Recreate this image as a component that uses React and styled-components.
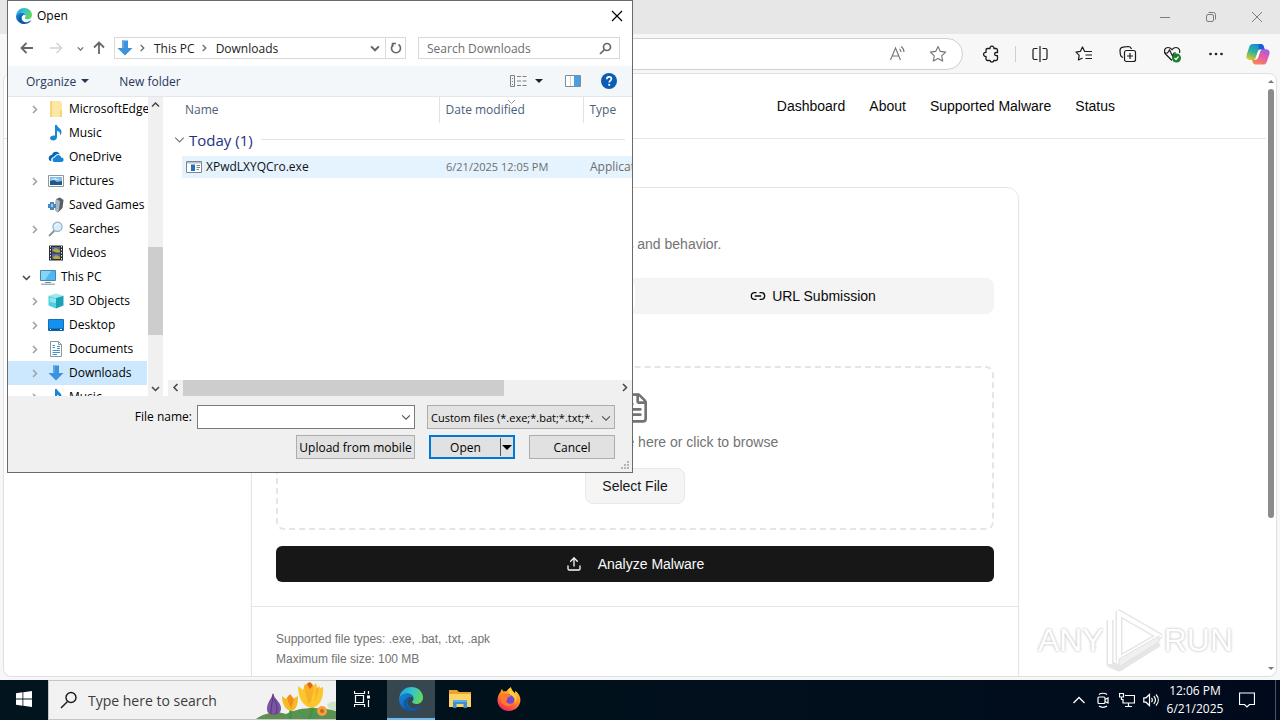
import { useState } from 'react';
import styled, { createGlobalStyle } from 'styled-components';
import { FileText, Link2, Upload } from 'lucide-react';

const GlobalStyle = createGlobalStyle`
  * {
    box-sizing: border-box;
  }
  body {
    margin: 0;
    overflow: hidden;
    background: #fff;
    font-family: 'Liberation Sans', Arial, sans-serif;
  }
  button, input, select {
    font-family: inherit;
    font-size: inherit;
    color: inherit;
    margin: 0;
    padding: 0;
    border: 0;
    border-radius: 0;
    background: none;
    outline: none;
  }
  svg {
    display: block;
    flex: none;
  }
`;

const uiFont = `'Open Sans', 'Noto Sans', sans-serif`;

const Desktop = styled.div`
  position: relative;
  display: flex;
  flex-direction: column;
  height: 100vh;
  overflow: hidden;
`;

/* ---------- Browser ---------- */

const Browser = styled.div`
  flex: 1;
  min-height: 0;
  display: flex;
  flex-direction: column;
  background: #f7f7f7;
`;

const BrowserTitle = styled.header`
  display: flex;
  justify-content: flex-end;
  height: 34px;
  background: #e7e7e7;
`;

const WindowButton = styled.button`
  display: flex;
  align-items: center;
  justify-content: center;
  width: 46px;
  height: 34px;
  color: #7c7c7c;
`;

const BrowserBar = styled.div`
  display: flex;
  align-items: center;
  height: 39px;
  padding: 0 2px 0 100px;
`;

const AddressField = styled.div`
  flex: 1;
  display: flex;
  align-items: center;
  justify-content: flex-end;
  height: 32px;
  margin-right: 6px;
  padding-right: 4px;
  border: 1px solid #cfcfcf;
  border-radius: 16px;
  background: #fff;
`;

const BarButton = styled.button`
  display: flex;
  align-items: center;
  justify-content: center;
  width: ${({ $width }) => $width || 44}px;
  height: 32px;
  color: ${({ $muted }) => ($muted ? '#757575' : '#1b1b1b')};
`;

const BarDivider = styled.span`
  width: 1px;
  height: 16px;
  margin: 0 2px;
  background: #cfcfcf;
`;

const Viewport = styled.div`
  flex: 1;
  min-height: 0;
  display: flex;
  margin: 0 3px 3px;
  border: 1px solid #e0e0e0;
  border-radius: 8px;
  background: #fff;
  overflow: hidden;
`;

const Page = styled.div`
  flex: 1;
  min-width: 0;
  overflow: hidden;
  color: #0a0a0a;
  font-size: 14px;
  line-height: 20px;
`;

const PageScroll = styled.div`
  display: flex;
  flex-direction: column;
  align-items: center;
  width: 10px;
  padding: 6px 0;
  gap: 6px;
`;

const PageScrollTrack = styled.div`
  flex: 1;
  display: flex;
  flex-direction: column;
`;

const PageThumb = styled.div`
  flex: 0 0 75%;
  width: 6px;
  border-radius: 3px;
  background: #8b8b8b;
`;

const SiteHeader = styled.header`
  border-bottom: 1px solid #e5e5e5;
`;

const SiteNav = styled.nav`
  display: flex;
  align-items: center;
  justify-content: flex-end;
  gap: 24px;
  max-width: 1024px;
  height: 64px;
  margin: 0 auto;
  padding: 0 32px;
`;

const SiteLink = styled.a`
  color: #0a0a0a;
  text-decoration: none;
`;

const Card = styled.section`
  max-width: 768px;
  margin: 48px auto;
  border: 1px solid #e5e5e5;
  border-radius: 12px;
  box-shadow: 0 1px 2px rgba(0, 0, 0, 0.06);
`;

const CardBody = styled.div`
  padding: 24px;
`;

const CardTitle = styled.h1`
  margin: 0 0 6px;
  font-size: 16px;
  line-height: 16px;
`;

const Muted = styled.p`
  margin: 0;
  color: #737373;
`;

const TabList = styled.div`
  display: flex;
  height: 36px;
  margin: 24px 0 16px;
  padding: 3px;
  border-radius: 8px;
  background: #f4f4f4;
`;

const Tab = styled.button`
  flex: 1;
  display: flex;
  align-items: center;
  justify-content: center;
  gap: 6px;
  border-radius: 6px;
  background: ${({ $active }) => ($active ? '#fff' : 'transparent')};
`;

const FieldLabel = styled.label`
  display: block;
`;

const DropZone = styled.div`
  display: flex;
  flex-direction: column;
  align-items: center;
  margin: 16px 0;
  padding: 24px;
  border: 2px dashed #e5e5e5;
  border-radius: 8px;
  color: #737373;

  p {
    margin: 8px 0 16px;
  }
`;

const SelectFile = styled.button`
  height: 36px;
  padding: 0 16px;
  border: 1px solid #e8e8e8;
  border-radius: 8px;
  background: #f5f5f5;
  color: #171717;
`;

const AnalyzeButton = styled.button`
  display: flex;
  align-items: center;
  justify-content: center;
  gap: 16px;
  width: 100%;
  height: 36px;
  border-radius: 6px;
  background: #171717;
  color: #fafafa;
`;

const CardFooter = styled.footer`
  display: flex;
  flex-direction: column;
  gap: 4px;
  padding: 24px;
  border-top: 1px solid #e5e5e5;
  color: #737373;
  font-size: 12px;
  line-height: 16px;
`;

const Watermark = styled.div`
  position: absolute;
  right: 47px;
  bottom: 48px;
  display: flex;
  align-items: center;
  color: #fff;
  font-size: 32px;
  line-height: 64px;
  text-shadow: 0 0 3px #c4c4c4, 0 0 2px #d4d4d4;
`;

/* ---------- Open dialog ---------- */

const Dialog = styled.div`
  position: absolute;
  left: 7px;
  top: 0;
  display: flex;
  flex-direction: column;
  width: 626px;
  height: 473px;
  border: 1px solid #6a6a6c;
  background: #fff;
  color: #000;
  font-family: ${uiFont};
  font-size: 12px;
  line-height: 16px;
  overflow: hidden;
`;

const DialogTitle = styled.div`
  display: flex;
  align-items: center;
  gap: 5px;
  height: 29px;
  padding: 0 9px 0 8px;
`;

const DialogClose = styled.button`
  margin-left: auto;
`;

const NavRow = styled.div`
  display: flex;
  align-items: center;
  height: 36px;
  padding: 0 12px 0 10px;
`;

const NavButton = styled.button`
  display: flex;
  align-items: center;
  justify-content: center;
  width: ${({ $width }) => $width}px;
  height: 20px;
  color: ${({ $disabled }) => ($disabled ? '#d2d2d2' : '#666')};
`;

const PathBox = styled.div`
  flex: 1;
  display: flex;
  align-items: center;
  height: 22px;
  margin-right: 12px;
  padding-left: 2px;
  border: 1px solid #d9d9d9;
`;

const Crumb = styled.button`
  padding-left: 3px;
  color: #222;
`;

const PathEnd = styled.div`
  display: flex;
  margin-left: auto;

  button + button {
    border-left: 1px solid #d9d9d9;
  }
`;

const SearchBox = styled.label`
  display: flex;
  align-items: center;
  width: 202px;
  height: 22px;
  padding: 0 7px 0 8px;
  border: 1px solid #d9d9d9;

  input {
    flex: 1;
    min-width: 0;
  }
  input::placeholder {
    color: #6d6d6d;
    opacity: 1;
  }
`;

const Toolbar = styled.div`
  display: flex;
  align-items: center;
  height: 31px;
  padding: 0 15px 0 18px;
  border-bottom: 1px solid #e3e7ec;
  background: #f4f7fa;
  color: #27365c;
`;

const ToolButton = styled.button`
  display: flex;
  align-items: center;
  gap: ${({ $inner }) => $inner || 5}px;
  margin-right: ${({ $gap }) => $gap || 0}px;
`;

const ToolbarEnd = styled.div`
  display: flex;
  align-items: center;
  margin-left: auto;
`;

const Panes = styled.div`
  flex: 1;
  min-height: 0;
  display: flex;
`;

const Tree = styled.ul`
  width: 140px;
  margin: 0;
  padding: 0;
  list-style: none;
  overflow: hidden;
`;

const TreeItem = styled.li`
  display: flex;
  align-items: center;
  height: 24px;
  margin-right: 1px;
  padding-left: ${({ $root }) => ($root ? 12 : 20)}px;
  background: ${({ $selected }) => ($selected ? '#cce8ff' : 'transparent')};
  white-space: nowrap;
`;

const Twisty = styled.span`
  flex: none;
  display: flex;
  align-items: center;
  justify-content: center;
  width: 13px;
  height: 16px;
  margin-right: 7px;
`;

const TreeLabel = styled.span`
  margin-left: 5px;
`;

const VScroll = styled.div`
  display: flex;
  flex-direction: column;
  width: 15px;
  background: #f0f0f0;
`;

const HScroll = styled.div`
  display: flex;
  height: 16px;
  background: #f0f0f0;
`;

const ScrollButton = styled.button`
  display: flex;
  align-items: center;
  justify-content: center;
  width: 15px;
  height: 15px;
  flex: none;
  color: #444;
`;

const ScrollSpace = styled.div`
  flex: ${({ $grow }) => $grow};
`;

const ScrollThumb = styled.div`
  flex: ${({ $grow }) => $grow};
  background: #cdcdcd;
`;

const FilePane = styled.div`
  flex: 1;
  min-width: 0;
  display: flex;
  flex-direction: column;
  margin-left: 5px;
`;

const FileArea = styled.div`
  flex: 1;
  overflow: hidden;
`;

const FileTable = styled.table`
  width: 700px;
  table-layout: fixed;
  border-collapse: collapse;

  th, td {
    padding: 0;
    text-align: left;
    font-weight: normal;
    white-space: nowrap;
  }
  thead tr {
    height: 26px;
  }
`;

const HeadCell = styled.th`
  position: relative;
  color: #4c607a;

  && {
    padding-left: ${({ $pad }) => $pad}px;
    border-left: ${({ $line }) => ($line ? '1px solid #e2e2e2' : '0')};
  }
`;

const SortMark = styled.span`
  position: absolute;
  top: 0;
  left: 50%;
  margin-left: -4px;
`;

const GroupRow = styled.div`
  display: flex;
  align-items: center;
  gap: 4px;
  width: 457px;
  height: 33px;
  padding-left: 6px;
  color: #1e3287;
  font-size: 15px;
  line-height: 20px;

  &::after {
    content: '';
    flex: 1;
    height: 1px;
    margin-left: 4px;
    background: #e2e2e2;
  }
`;

const FileRow = styled.tr`
  height: 22px;
  color: #6d6d6d;

  td + td {
    padding-left: 7px;
    background: #e5f3ff;
  }
  td + td:nth-child(2) {
    padding-left: 4px;
    color: #111;
  }
  td:nth-child(3) {
    font-size: 11px;
  }
`;

const FileName = styled.span`
  display: flex;
  align-items: center;
  gap: 4px;
`;

const DialogFooter = styled.div`
  position: relative;
  display: flex;
  flex-direction: column;
  align-items: flex-end;
  gap: 6px;
  height: 76px;
  padding: 9px 17px 0 0;
  background: #f0f0f0;
`;

const FooterRow = styled.div`
  display: flex;
  align-items: center;
`;

const NameLabel = styled.label`
  margin-right: 5px;
`;

const ComboBox = styled.div`
  display: flex;
  align-items: center;
  width: 218px;
  height: 24px;
  margin-right: 12px;
  padding: 0 3px;
  border: 1px solid #7a7a7a;
  background: #fff;

  input {
    flex: 1;
    min-width: 0;
  }
`;

const TypeBox = styled.div`
  position: relative;
  width: 188px;
  height: 24px;
  border: 1px solid #adadad;
  background: #e3e3e3;

  select {
    width: 100%;
    height: 22px;
    padding: 0 16px 0 3px;
    appearance: none;
    font-size: 11px;
  }
  svg {
    position: absolute;
    top: 7px;
    right: 3px;
    pointer-events: none;
  }
`;

const PushButton = styled.button`
  width: ${({ $width }) => $width}px;
  height: 24px;
  margin-right: ${({ $gap }) => $gap || 0}px;
  border: 1px solid #adadad;
  background: #e1e1e1;
`;

const SplitButton = styled.div`
  display: flex;
  align-items: center;
  width: 86px;
  height: 24px;
  margin-right: 14px;
  border: 2px solid #0078d7;
  background: #e1e1e1;
`;

const SplitMain = styled.button`
  flex: 1;
`;

const SplitArrow = styled.button`
  display: flex;
  align-items: center;
  justify-content: center;
  width: 13px;
  height: 18px;
  border-left: 1px solid #555;
`;

const Grip = styled.span`
  position: absolute;
  right: 2px;
  bottom: 2px;
`;

/* ---------- Taskbar ---------- */

const Taskbar = styled.footer`
  display: flex;
  height: 40px;
  background: linear-gradient(90deg, #02141d, #01101c 60%, #010a1d);
  color: #fff;
  font-family: ${uiFont};
`;

const TaskButton = styled.button`
  display: flex;
  align-items: center;
  justify-content: center;
  width: ${({ $width }) => $width || 49}px;
  border-bottom: 2px solid ${({ $active }) => ($active ? '#76b9ed' : 'transparent')};
  background: ${({ $active }) => ($active ? '#36474f' : 'transparent')};
`;

const TaskSearch = styled.label`
  display: flex;
  align-items: center;
  width: 288px;
  padding-left: 11px;
  border: 1px solid #c5c5c5;
  border-right: 0;
  background: #f2f2f2;
  color: #1b1b1b;

  input {
    flex: 1;
    min-width: 0;
    margin-left: 10px;
    font-size: 14px;
  }
  input::placeholder {
    color: #3c3c3c;
    opacity: 1;
  }
`;

const Tray = styled.div`
  display: flex;
  align-items: center;
  margin-left: auto;
`;

const TrayButton = styled.button`
  display: flex;
  align-items: center;
  justify-content: center;
  width: ${({ $width }) => $width || 24}px;
  height: 40px;
`;

const Clock = styled.div`
  width: 64px;
  text-align: center;
  font-size: 12px;
  line-height: 18px;
  white-space: nowrap;
`;

const ShowDesktop = styled.button`
  width: 5px;
  height: 40px;
  margin-left: 8px;
  border-left: 1px solid #4b5563;
`;

/* ---------- Icons ---------- */

const Line = ({ size = 16, box = size, width = 1, children, ...rest }) => (
  <svg width={size} height={size} viewBox={`0 0 ${box} ${box}`} fill="none" stroke="currentColor" strokeWidth={width} aria-hidden="true" {...rest}>
    {children}
  </svg>
);

const chevrons = {
  up: 'M1 6.5 4.5 3 8 6.5',
  down: 'M1 3 4.5 6.5 8 3',
  left: 'M6.5 1 3 4.5 6.5 8',
  right: 'M3 1 6.5 4.5 3 8',
};

const Chevron = ({ dir, size = 9, color = 'currentColor', width = 1.5 }) => (
  <svg width={size} height={size} viewBox="0 0 9 9" fill="none" stroke={color} strokeWidth={width} aria-hidden="true">
    <path d={chevrons[dir]} />
  </svg>
);

const Caret = ({ up, size = 8, color = 'currentColor' }) => (
  <svg width={size} height={size / 2} viewBox="0 0 8 4" fill={color} aria-hidden="true">
    <path d={up ? 'M0 4 4 0l4 4z' : 'M0 0h8L4 4z'} />
  </svg>
);

const EdgeIcon = ({ size, id }) => (
  <svg width={size} height={size} viewBox="0 0 24 24" aria-hidden="true">
    <defs>
      <linearGradient id={`${id}-top`} x1="0" y1="0.3" x2="1" y2="0.6">
        <stop offset="0" stopColor="#1ba5e0" />
        <stop offset="0.5" stopColor="#36c5c8" />
        <stop offset="1" stopColor="#66d955" />
      </linearGradient>
      <linearGradient id={`${id}-low`} x1="0" y1="0" x2="1" y2="1">
        <stop offset="0" stopColor="#1687d8" />
        <stop offset="1" stopColor="#0f4a9b" />
      </linearGradient>
    </defs>
    <path d="M0.2 11.3C.8 4.8 6 0 12.300 0 19 0 24 4.800 24 10.400c0 4-3 6.500-6.500 6.500-3 0-4.300-1.100-4.300-2 0-.7 1.300-1.200 1.300-3.300 0-2.800-2.600-5-6-5-3.600 0-6.800 1.900-8.300 4.700z" fill={`url(#${id}-top)`} />
    <path d="M.1 11.500C1.500 8.500 4.600 6.600 8 6.600c3.600 0 6.300 2.200 6.400 4.800-.8-1-1.900-1.300-2.700-1.300-2 0-3.300 2.200-3.300 4.800 0 4.300 4 7 8.200 6.300 2-.3 3.900-1.300 5.100-2.300.4-.2.800 0 .6.500C20.500 22.300 16.500 24 12.300 24 5.500 24-.4 18.800.1 11.500z" fill={`url(#${id}-low)`} />
    <path d="M11.500 10.200c-3.800 1.500-4.800 6-2.700 9.400 1 1.700 2.900 3.100 5.400 4.200C8 25 2.800 19.500 5.400 13.800c1-2.300 3.400-4 6.100-3.600z" fill="#0c59a4" />
  </svg>
);

const CopilotIcon = () => (
  <svg width="24" height="22" viewBox="0 0 24 22" aria-hidden="true">
    <defs>
      <linearGradient id="cp-a" x1="0.6" y1="0" x2="0.2" y2="1">
        <stop offset="0" stopColor="#1687e0" />
        <stop offset="0.5" stopColor="#2fb59b" />
        <stop offset="1" stopColor="#e6c81e" />
      </linearGradient>
      <linearGradient id="cp-b" x1="0.8" y1="0" x2="0.2" y2="1">
        <stop offset="0" stopColor="#a35be8" />
        <stop offset="0.5" stopColor="#ea5f9e" />
        <stop offset="1" stopColor="#f98a45" />
      </linearGradient>
    </defs>
    <path d="M7 1h8c1.500 0 2.300 1 2.800 2.400l.9 3h-3.400c-2 0-3 .8-3.600 2.600L9.500 15c-.5 1.500-1.400 2-2.800 2H4.300C1 17-.2 14.800.7 11.700L3.200 4C3.900 1.900 5 1 7 1z" fill="url(#cp-a)" />
    <path d="M17 21.500H9.400c-1.500 0-2.300-1-2.800-2.400L6 16.800h2.600c2 0 3-.8 3.600-2.600l2-6c.5-1.500 1.400-2 2.800-2h2.700c3.300 0 4.500 2.200 3.600 5.300l-2.500 7.200c-.7 2-1.800 2.800-3.800 2.800z" fill="url(#cp-b)" />
    <path d="M12.500 1H15c1.500 0 2.300 1 2.800 2.400l.9 3h-3.400c-1.200 0-2 .3-2.600.9z" fill="#1b5fd0" />
    <path d="m12.700 6.800-2.800 8.400h1.600l2.700-7c.3-.8.800-1.400 1.400-1.700z" fill="#fff" />
  </svg>
);

const StarIcon = ({ size = 18 }) => (
  <Line size={size} box={18} width={1.1} strokeLinejoin="round">
    <path d="m9 1.500 2.300 4.900 5.300.7-3.900 3.700 1 5.300L9 13.500l-4.700 2.600 1-5.300-3.900-3.700 5.300-.7z" />
  </Line>
);

const DownloadArrow = ({ size = 16 }) => (
  <svg width={size} height={size} viewBox="0 0 16 16" aria-hidden="true">
    <path d="M5 .5h6V8h4.500L8 15.500.5 8H5z" fill="#3c93dc" />
    <path d="M5 .5h2V8H5z" fill="#5aa8e6" />
  </svg>
);

const Glyph = ({ children }) => (
  <svg width="16" height="16" viewBox="0 0 16 16" aria-hidden="true">{children}</svg>
);

const folderIcons = {
  folder: (
    <Glyph>
      <path d="M2 0h10l2 2v14H2z" fill="#fbe7a2" />
      <path d="M2 0h2v16H2zM12 9h2v7h-2z" fill="#f5d67c" />
    </Glyph>
  ),
  music: (
    <Glyph>
      <path d="M7 0h2c.3 2.500 4.500 3.500 4.500 7 0 1.500-.6 2.600-1.300 3.500.4-2.700-1-4-3.200-4.700V12c0 2-1.700 3.500-3.800 3.500C3.400 15.500 2 14.500 2 13c0-1.800 2.500-3 5-2.500z" fill="#1888d2" />
    </Glyph>
  ),
  onedrive: (
    <Glyph>
      <path d="M1 10.500C0 8 2 6 4 6c.6-2.500 3-3.700 5.200-3 1.400.4 2.300 1.400 2.700 2.600-3-.7-5 .5-5.700 2.600C4 8.200 3.200 10 3.500 12 2.300 12 1.400 11.500 1 10.500z" fill="#0a64b4" />
      <path d="M4.500 11c0-1.500 1-2.500 2.400-2.500C7.500 6.500 9 5.800 10.500 6s2.400 1.200 2.600 2.500c1.500 0 2.500.9 2.500 2.300S14.500 13 13 13H6.500c-1.200 0-2-.8-2-2z" fill="#1683d8" />
      <path d="M4.200 12.500C2.800 9.500 4.500 8.200 6.300 8.200 7.300 5.800 9.800 5 11.900 5.600" fill="none" stroke="#fff" strokeWidth="0.800" />
    </Glyph>
  ),
  pictures: (
    <Glyph>
      <path d="M.5 2.500h15v11H.5z" fill="#fff" stroke="#8c979e" />
      <path d="M2 4h12v8H2z" fill="#7fbdea" />
      <path d="m2 8 4-1 3 2 5-1v4H2z" fill="#23578a" />
      <path d="M2 6.500 7 5l5 2z" fill="#d9effc" />
    </Glyph>
  ),
  games: (
    <Glyph>
      <path d="m8 2 4-1.500L15.500 3l-1 8L10 15.500 7 13z" fill="#555f68" />
      <path d="m8 2 4 2-1 9-1 2.500L7 13z" fill="#aab4bc" />
      <path d="M2 5h4v2h2v4H6v2H2v-2H0V7h2z" fill="#4689c0" />
      <path d="M3 7h2v3H3z" fill="#9ccbec" />
    </Glyph>
  ),
  search: (
    <Glyph>
      <path d="m6.500 9.500-5.500 5.500" stroke="#8c949b" strokeWidth="1.800" />
      <circle cx="9.500" cy="5.800" r="4.600" fill="#d8effb" stroke="#8fb0c8" strokeWidth="1.200" />
      <path d="M7 5c.3-1.200 1.500-2 3-1.800" stroke="#fff" fill="none" />
    </Glyph>
  ),
  videos: (
    <Glyph>
      <path d="M1 .5h14v15H1z" fill="#2b2d35" />
      <path d="M2.500 1v14M13.500 1v14" stroke="#e6e6e6" strokeDasharray="1.500 1.500" />
      <path d="M4 2h8v5.500H4zM4 8.500h8V14H4z" fill="#5369a4" />
      <path d="m4 5 4-2 4 2.500v2H8zM5 12l3-2 4 2v2H6z" fill="#b8a835" />
    </Glyph>
  ),
  pc: (
    <Glyph>
      <path d="M.5 1.500h15v10H.5z" fill="#4fb8f0" stroke="#4389ad" />
      <path d="M1 2h10L5 11H1z" fill="#8ad3f8" />
      <path d="M5 13.500h6M1 15.200h14" stroke="#7c8c96" />
    </Glyph>
  ),
  objects: (
    <Glyph>
      <path d="m8 .5 7.500 2.200L8 5 .5 2.700z" fill="#9aeaf0" />
      <path d="M.5 2.700 8 5v10.500L.5 12.500z" fill="#52cfdc" />
      <path d="M15.500 2.700 8 5v10.500l7.500-3z" fill="#1aa3b8" />
      <path d="M2 4.500 8 6v4L2 9z" fill="#8fe6ee" />
    </Glyph>
  ),
  desktop: (
    <Glyph>
      <path d="M.5 2.500h15v11H.5z" fill="#1592ef" stroke="#0f70b8" />
      <path d="M1 11.500h14v2H1z" fill="#0a568f" />
      <path d="M2 12.500h1M12 12.500h2" stroke="#fff" />
    </Glyph>
  ),
  documents: (
    <Glyph>
      <path d="M2.500.5h8l3 3v12h-11z" fill="#fff" stroke="#8a979f" />
      <path d="M10.500.5v3h3" fill="none" stroke="#8a979f" />
      <path d="M4.500 4.500H7M9 5.500h3M4.500 6.500H7M9 7.500h3M4.500 9.500h7.500M4.500 11.500h7.500M4.500 13.500H9" stroke="#3d93cb" />
    </Glyph>
  ),
  downloads: <DownloadArrow />,
};

const treeItems = [
  { label: 'MicrosoftEdge', icon: 'folder', expand: true },
  { label: 'Music', icon: 'music' },
  { label: 'OneDrive', icon: 'onedrive' },
  { label: 'Pictures', icon: 'pictures', expand: true },
  { label: 'Saved Games', icon: 'games' },
  { label: 'Searches', icon: 'search', expand: true },
  { label: 'Videos', icon: 'videos' },
  { label: 'This PC', icon: 'pc', root: true },
  { label: '3D Objects', icon: 'objects', expand: true },
  { label: 'Desktop', icon: 'desktop', expand: true },
  { label: 'Documents', icon: 'documents', expand: true },
  { label: 'Downloads', icon: 'downloads', expand: true },
  { label: 'Music', icon: 'music', expand: true },
];

const FlowerArt = () => (
  <svg width="80" height="38" viewBox="0 0 80 38" aria-hidden="true">
    <path d="M0 38c8-6 20-8 30-5 12-7 34-8 50-3v8z" fill="#5d9150" />
    <g transform="translate(4 0)">
      <path d="M13 12c-1 5-6 9-6 16 0 4 3 6 7 6 5 0 7-3 7-7 0-6-7-9-8-15z" fill="#7a55a0" />
      <path d="M13 13c0 7-2 10-2 20M14 18c3 5 4 9 2 15" stroke="#55357c" fill="none" />
      <path d="M31 29c-1 4 0 7-1 9M52 26c1 5-2 9-3 12" stroke="#42924a" strokeWidth="3" fill="none" />
      <path d="M46 38c-3-6-5-8-7-10 1 5 3 8 6 10zM51 37c4-3 7-7 13-9-3 6-7 8-11 10z" fill="#3d9a52" />
      <path d="m22 15 4 3 3-4 4 4 5-3c0 7-1 14-7 15-6-1-9-8-9-15z" fill="#f6ba24" />
      <path d="m27 17 3-4 4 5-3 10z" fill="#f18f1d" />
      <path d="m38 5 5 4 2-6 6 4 5-5 2 6 5-2c1 11-3 19-11 21-10-1-14-12-14-22z" fill="#fcc62d" />
      <path d="m44 5 5-4 5 5-3 15-3 2zM56 8l4-3-5 16z" fill="#f8b026" />
      <path d="m47 3 3-2 3 3-3 4z" fill="#df641b" />
      <circle cx="62" cy="30" r="5" fill="#f5a13a" />
      <circle cx="62" cy="30" r="2" fill="#c9651c" />
    </g>
    <path d="M71 24c3-4 7-4 9-3v8c-4 1-7-1-9-5z" fill="#b9d7ac" opacity="0.6" />
  </svg>
);

const FirefoxIcon = () => (
  <svg width="24" height="24" viewBox="0 0 24 24" aria-hidden="true">
    <defs>
      <linearGradient id="ff" x1="0.8" y1="0" x2="0.3" y2="1">
        <stop offset="0" stopColor="#ffe14d" />
        <stop offset="0.4" stopColor="#ff9a1f" />
        <stop offset="1" stopColor="#f5235e" />
      </linearGradient>
    </defs>
    <path d="M3.500 5c.3-1.300.8-2.200 1.500-3 .3 1 .8 1.800 1.600 2.500 1-.3 2-.4 3-.3C10.500 2.500 12.500.8 14 .3c0 2.500 2 3.800 4 6 .3-.8.2-1.700 0-2.500 3.500 2.400 5.700 5.800 5.400 9.800C23 19.500 18 24 12 24 5.500 24 .5 19.200.5 13c0-3 1-5.800 3-8z" fill="url(#ff)" />
    <circle cx="12" cy="12.500" r="5.200" fill="#7646d6" />
    <path d="M4 8c2-2 5-2 7-.5l3 .5c0 1.500-1.500 2-3 2-1 1.500-.5 3-2 4 1 2.500 4 3.500 7 2-2 3.500-6 4-9 2-3-2.200-4-6-3-10z" fill="#ff7a2b" />
    <path d="M14 .3c0 4 4.500 6 5.500 11 .4 2-.2 4-1.500 5.500 2-6-3-7.500-5.500-10C11 4 12.500 1.500 14 .3z" fill="#ffcf3a" />
  </svg>
);

export default function App() {
  const [fileName, setFileName] = useState('');

  return (
    <>
      <GlobalStyle />
      <Desktop>
        <Browser>
          <BrowserTitle>
            <WindowButton aria-label="Minimize">
              <Line size={12}><path d="M1 6.500h10" /></Line>
            </WindowButton>
            <WindowButton aria-label="Restore">
              <Line size={12}>
                <rect x="1.500" y="3.500" width="7" height="7" rx="1.500" />
                <path d="M3.500 1.500h5a2 2 0 0 1 2 2v5" />
              </Line>
            </WindowButton>
            <WindowButton aria-label="Close">
              <Line size={12}><path d="m1 1 10 10M11 1 1 11" /></Line>
            </WindowButton>
          </BrowserTitle>

          <BrowserBar>
            <AddressField>
              <BarButton $muted $width={40} aria-label="Read aloud">
                <Line size={18} width={1.1}>
                  <path d="m1.500 15 5-12 5 12M3.200 11h6.600M10.500 4c1 .8 1.500 1.800 1.500 3M12 1.500c2 1.300 3 3 3 5.500" />
                </Line>
              </BarButton>
              <BarButton $muted $width={40} aria-label="Add to favorites">
                <StarIcon />
              </BarButton>
            </AddressField>
            <BarButton aria-label="Extensions">
              <Line size={18} width={1.300} strokeLinejoin="round">
                <path d="M5.500 3.500H8a2 2 0 1 1 3.900 0h2A1.500 1.500 0 0 1 15.500 5v2.500h-1.300a1.600 1.600 0 0 0 0 3.200h1.300V14a1.500 1.500 0 0 1-1.500 1.500h-2.100a2 2 0 0 1-3.900 0H5.500A1.500 1.500 0 0 1 4 14v-2.700a2 2 0 1 1 0-3.900V5a1.500 1.500 0 0 1 1.500-1.500z" />
              </Line>
            </BarButton>
            <BarDivider />
            <BarButton aria-label="Split screen">
              <Line size={18} width={1.200}>
                <path d="M9 1v16M6.500 3.500h-3a1.500 1.500 0 0 0-1.500 1.500v8a1.500 1.500 0 0 0 1.500 1.500h3M11.500 3.500h3A1.500 1.500 0 0 1 16 5v8a1.500 1.500 0 0 1-1.500 1.500h-3" />
              </Line>
            </BarButton>
            <BarButton aria-label="Favorites">
              <Line size={18} width={1.200} strokeLinejoin="round">
                <path d="M10.500 6.500h-.8L7.500 2 5.300 6.400l-4.300.7 3.200 3.200-.8 4.700L7.500 13M10.500 6.500H17M10.500 10H17M10.500 13.500H17" />
              </Line>
            </BarButton>
            <BarButton aria-label="Collections">
              <Line size={18} width={1.200}>
                <path d="M4 12.500C2 12 1.500 10.500 1.300 9L1 5.500C1 3.500 2 2.500 4 2.200l5-.7c1.800 0 3 .8 3.500 2.500" />
                <rect x="5.500" y="5.500" width="11" height="11" rx="2" />
                <path d="M11 8v6M8 11h6" />
              </Line>
            </BarButton>
            <BarButton aria-label="Browser essentials">
              <Line size={18} width={1.200}>
                <path d="M9 15.500 2.500 9C.5 6.500 1.500 2.500 5 2.500c2 0 3 1 4 2.200 1-1.200 2-2.200 4-2.200 3 0 4.500 3 3.500 5.500M1 8h3.500L6.500 5l3 6 1.500-3h2" />
                <circle cx="13.500" cy="13" r="4.500" fill="#16812b" stroke="none" />
                <path d="m11.500 13 1.500 1.500 2.500-3" stroke="#fff" />
              </Line>
            </BarButton>
            <BarButton aria-label="Settings and more">
              <Line size={18}>
                <g fill="currentColor" stroke="none">
                  <circle cx="3.500" cy="9" r="1.300" />
                  <circle cx="9" cy="9" r="1.300" />
                  <circle cx="14.500" cy="9" r="1.300" />
                </g>
              </Line>
            </BarButton>
            <BarButton $width={40} aria-label="Copilot"><CopilotIcon /></BarButton>
          </BrowserBar>

          <Viewport>
            <Page>
              <SiteHeader>
                <SiteNav>
                  <SiteLink href="#dashboard">Dashboard</SiteLink>
                  <SiteLink href="#about">About</SiteLink>
                  <SiteLink href="#supported">Supported Malware</SiteLink>
                  <SiteLink href="#status">Status</SiteLink>
                </SiteNav>
              </SiteHeader>

              <Card>
                <CardBody>
                  <CardTitle>Submit Malware</CardTitle>
                  <Muted>Upload a file or submit a URL to inspect its characteristics and behavior.</Muted>
                  <TabList role="tablist">
                    <Tab role="tab" aria-selected="true" $active>File Upload</Tab>
                    <Tab role="tab" aria-selected="false">
                      <Link2 size={16} />
                      URL Submission
                    </Tab>
                  </TabList>
                  <FieldLabel htmlFor="select-file">File</FieldLabel>
                  <DropZone>
                    <FileText size={32} />
                    <p>Drag and drop your file here or click to browse</p>
                    <SelectFile id="select-file">Select File</SelectFile>
                  </DropZone>
                  <AnalyzeButton>
                    <Upload size={16} />
                    Analyze Malware
                  </AnalyzeButton>
                </CardBody>
                <CardFooter>
                  <span>Supported file types: .exe, .bat, .txt, .apk</span>
                  <span>Maximum file size: 100 MB</span>
                </CardFooter>
              </Card>
            </Page>
            <PageScroll>
              <Caret up size={6} color="#7b7b7b" />
              <PageScrollTrack><PageThumb /></PageScrollTrack>
              <Caret size={6} color="#7b7b7b" />
            </PageScroll>
          </Viewport>
        </Browser>

        <Watermark>
          <span>ANY</span>
          <svg width="60" height="64" viewBox="0 0 60 64" fill="none" aria-hidden="true">
            <g stroke="#e6e6e6" strokeWidth="7" strokeLinejoin="round">
              <path d="M15 5v46l40-23zM6 12v44l9 4 40-25" />
            </g>
            <g stroke="#fff" strokeWidth="4">
              <path d="M15 5v46l40-23zM6 12v44" />
            </g>
            <path d="M15 51v8l40-25v-6z" fill="#f0f0f0" stroke="#e2e2e2" />
          </svg>
          <span>RUN</span>
        </Watermark>

        <Dialog role="dialog" aria-label="Open">
          <DialogTitle>
            <EdgeIcon size={16} id="edge-small" />
            <span>Open</span>
            <DialogClose aria-label="Close">
              <Line size={12} width={1.200}><path d="m1 1 10 10M11 1 1 11" /></Line>
            </DialogClose>
          </DialogTitle>

          <NavRow>
            <NavButton $width={18} aria-label="Back">
              <Line size={14} width={1.800}><path d="M13 7H2M6.500 2 1.500 7l5 5" /></Line>
            </NavButton>
            <NavButton $width={40} $disabled aria-label="Forward">
              <Line size={14} width={1.500}><path d="M1 7h11M7.500 2l5 5-5 5" /></Line>
            </NavButton>
            <NavButton $width={8} aria-label="Recent locations"><Chevron dir="down" size={7} /></NavButton>
            <NavButton $width={30} aria-label="Up">
              <Line size={14} width={1.800}><path d="M7 13V2M2 6.500l5-5 5 5" /></Line>
            </NavButton>
            <PathBox>
              <DownloadArrow />
              <NavButton $width={18} aria-label="Show folders"><Chevron dir="right" size={8} /></NavButton>
              <Crumb>This PC</Crumb>
              <NavButton $width={18} aria-label="Show This PC folders"><Chevron dir="right" size={8} /></NavButton>
              <Crumb>Downloads</Crumb>
              <PathEnd>
                <NavButton $width={20} aria-label="Previous locations"><Chevron dir="down" size={10} width={1.800} /></NavButton>
                <NavButton $width={20} aria-label="Refresh">
                  <Line size={12} width={1.600}>
                    <path d="M8.500 2.500A4.500 4.500 0 1 1 3.500 2.500M2.500 1v4M2 1.500h4" />
                  </Line>
                </NavButton>
              </PathEnd>
            </PathBox>
            <SearchBox>
              <input type="text" placeholder="Search Downloads" aria-label="Search Downloads" />
              <Line size={13} width={1.700} color="#666">
                <circle cx="8" cy="5" r="3.500" />
                <path d="M5.500 7.500 1 12" />
              </Line>
            </SearchBox>
          </NavRow>

          <Toolbar>
            <ToolButton $gap={30}>Organize <Caret color="#27365c" /></ToolButton>
            <ToolButton>New folder</ToolButton>
            <ToolbarEnd>
              <ToolButton $gap={22} $inner={8} aria-label="Change your view">
                <svg width="17" height="14" viewBox="0 0 17 14" fill="none" stroke="#7d7d7d" aria-hidden="true">
                  <path d="M.5 1.500h4v11h-4z" />
                  <path d="M2 4.500h1M2 7.500h1M2 10.500h1" />
                  <path d="M7 2.500h10M7 7h10M7 11.500h10" strokeDasharray="4 1.500" />
                </svg>
                <Caret color="#222" />
              </ToolButton>
              <ToolButton $gap={20} aria-label="Preview pane">
                <svg width="16" height="12" viewBox="0 0 16 12" aria-hidden="true">
                  <path d="M.5.5h15v11H.5z" fill="#fff" stroke="#7d8c96" />
                  <path d="M9 1h6v10H9z" fill="#4b9fe0" />
                  <path d="M5.500 1v10" stroke="#cdd5da" />
                </svg>
              </ToolButton>
              <ToolButton aria-label="Help">
                <svg width="16" height="16" viewBox="0 0 16 16" aria-hidden="true">
                  <circle cx="8" cy="8" r="8" fill="#0b5db5" />
                  <path d="M5.800 6.200c0-1.500 1-2.300 2.300-2.300s2.300.8 2.300 2c0 1.700-2.200 1.800-2.200 3.600" fill="none" stroke="#fff" strokeWidth="1.600" />
                  <circle cx="8.200" cy="11.800" r="1.100" fill="#fff" />
                </svg>
              </ToolButton>
            </ToolbarEnd>
          </Toolbar>

          <Panes>
            <Tree>
              {treeItems.map((item, i) => (
                <TreeItem key={i} $root={item.root} $selected={item.label === 'Downloads'}>
                  <Twisty>
                    {item.expand && <Chevron dir="right" color="#a0a0a0" />}
                    {item.root && <Chevron dir="down" color="#444" />}
                  </Twisty>
                  {folderIcons[item.icon]}
                  <TreeLabel>{item.label}</TreeLabel>
                </TreeItem>
              ))}
            </Tree>
            <VScroll>
              <ScrollButton aria-label="Scroll up"><Chevron dir="up" /></ScrollButton>
              <ScrollSpace $grow={135} />
              <ScrollThumb $grow={88} />
              <ScrollSpace $grow={46} />
              <ScrollButton aria-label="Scroll down"><Chevron dir="down" /></ScrollButton>
            </VScroll>
            <FilePane>
              <FileArea>
                <FileTable>
                  <colgroup>
                    <col style={{ width: 14 }} />
                    <col style={{ width: 257 }} />
                    <col style={{ width: 144 }} />
                    <col />
                  </colgroup>
                  <thead>
                    <tr>
                      <HeadCell colSpan={2} $pad={17}>Name</HeadCell>
                      <HeadCell $pad={6} $line>
                        <SortMark><Chevron dir="down" color="#9a9a9a" width={1} /></SortMark>
                        Date modified
                      </HeadCell>
                      <HeadCell $pad={6} $line>Type</HeadCell>
                    </tr>
                  </thead>
                  <tbody>
                    <tr>
                      <td colSpan={4}>
                        <GroupRow>
                          <Chevron dir="down" size={11} color="#777" width={1} />
                          Today (1)
                        </GroupRow>
                      </td>
                    </tr>
                    <FileRow>
                      <td />
                      <td>
                        <FileName>
                          <svg width="16" height="12" viewBox="0 0 16 12" aria-hidden="true">
                            <path d="M.5.500h15v11H.5z" fill="#fff" stroke="#7c8790" />
                            <path d="M1 1h14v1.500H1z" fill="#b8c0c6" />
                            <path d="M5 3.500h4v6.500H5z" fill="#2074b8" />
                            <path d="M10.500 4.500H14M10.500 6.500H14M10.500 8.500H13" stroke="#7c8790" />
                          </svg>
                          XPwdLXYQCro.exe
                        </FileName>
                      </td>
                      <td>6/21/2025 12:05 PM</td>
                      <td>Application</td>
                    </FileRow>
                  </tbody>
                </FileTable>
              </FileArea>
              <HScroll>
                <ScrollButton aria-label="Scroll left"><Chevron dir="left" /></ScrollButton>
                <ScrollThumb $grow={321} />
                <ScrollSpace $grow={113} />
                <ScrollButton aria-label="Scroll right"><Chevron dir="right" /></ScrollButton>
              </HScroll>
            </FilePane>
          </Panes>

          <DialogFooter>
            <FooterRow>
              <NameLabel htmlFor="file-name">File name:</NameLabel>
              <ComboBox>
                <input id="file-name" type="text" value={fileName} onChange={(e) => setFileName(e.target.value)} />
                <Chevron dir="down" size={10} color="#555" width={1} />
              </ComboBox>
              <TypeBox>
                <select aria-label="File type">
                  <option>Custom files (*.exe;*.bat;*.txt;*.</option>
                </select>
                <Chevron dir="down" size={10} color="#555" width={1} />
              </TypeBox>
            </FooterRow>
            <FooterRow>
              <PushButton $width={119} $gap={14}>Upload from mobile</PushButton>
              <SplitButton>
                <SplitMain>Open</SplitMain>
                <SplitArrow aria-label="Open options"><Caret size={10} color="#000" /></SplitArrow>
              </SplitButton>
              <PushButton $width={86}>Cancel</PushButton>
            </FooterRow>
            <Grip>
              <svg width="10" height="10" viewBox="0 0 10 10" fill="#b5b5b5" aria-hidden="true">
                <path d="M7 1h2v2H7zM4 4h2v2H4zM7 4h2v2H7zM1 7h2v2H1zM4 7h2v2H4zM7 7h2v2H7z" />
              </svg>
            </Grip>
          </DialogFooter>
        </Dialog>

        <Taskbar>
          <TaskButton $width={48} aria-label="Start">
            <svg width="16" height="16" viewBox="0 0 16 16" fill="#fff" aria-hidden="true">
              <path d="M0 2.200 6.500 1.300v6.300H0zM7.300 1.200 16 0v7.600H7.300zM0 8.400h6.500v6.300L0 13.800zM7.300 8.400H16V16l-8.700-1.200z" />
            </svg>
          </TaskButton>
          <TaskSearch>
            <Line size={18} width={1.400}>
              <circle cx="11" cy="6.500" r="5" />
              <path d="M7.500 10.500 1 17" />
            </Line>
            <input type="text" placeholder="Type here to search" aria-label="Type here to search" />
            <FlowerArt />
          </TaskSearch>
          <TaskButton $width={51} aria-label="Task view">
            <Line size={16} width={1.200}>
              <path d="M.5 0v2.500h10V0M.5 16v-2.500h10V16M1.500 4.500h8v7h-8zM14.500 0v3M14.500 9v7" />
              <path d="M13 4.500h3v3h-3z" fill="currentColor" stroke="none" />
            </Line>
          </TaskButton>
          <TaskButton $width={48} $active aria-label="Microsoft Edge"><EdgeIcon size={24} id="edge-task" /></TaskButton>
          <TaskButton aria-label="File Explorer">
            <svg width="22" height="20" viewBox="0 0 22 20" aria-hidden="true">
              <path d="M0 1h8l2 2h12v4H0z" fill="#e9a42c" />
              <path d="M0 5h22v13H0z" fill="#fcd465" />
              <path d="M4 11h14v8h-3.500v-4h-7v4H4z" fill="#3c8fd0" />
              <path d="M4 11h14v2H4z" fill="#5fb0e8" />
            </svg>
          </TaskButton>
          <TaskButton aria-label="Firefox"><FirefoxIcon /></TaskButton>

          <Tray>
            <TrayButton aria-label="Show hidden icons">
              <Line size={12} width={1.300}><path d="m.5 9 5.500-5.500L11.500 9" /></Line>
            </TrayButton>
            <TrayButton aria-label="Meet now">
              <Line size={16} width={1.200}>
                <rect x="3" y="5" width="7" height="6.500" rx="1" />
                <path d="m10 7.500 3-1.500v5l-3-1.500M4 2.500C6 .8 10 .8 12 2.500M4 14c2 1.700 6 1.700 8 0" />
              </Line>
            </TrayButton>
            <TrayButton aria-label="Network">
              <Line size={16} width={1.200}>
                <path d="M6 3.500h9.500v7.500H4V7M9.500 11v3.500M6 14.500h7M.5 1.500h4v3.500h-4zM2.500 5v2.500H4" />
              </Line>
            </TrayButton>
            <TrayButton aria-label="Volume">
              <Line size={16} width={1.200}>
                <path d="M.8 5.800H3L6.500 2.500v11L3 10.200H.8zM8.500 6c1 1.200 1 2.800 0 4M10.800 4.200c2 2.300 2 5.300 0 7.600M13 2.500c3 3.300 3 7.700 0 11" />
              </Line>
            </TrayButton>
            <Clock>
              <div>12:06 PM</div>
              <div>6/21/2025</div>
            </Clock>
            <TrayButton $width={40} aria-label="Notifications">
              <Line size={16} width={1.200}>
                <path d="M.5 1h15v11.500h-5L8 15l-2.500-2.500h-5z" />
              </Line>
            </TrayButton>
            <ShowDesktop aria-label="Show desktop" />
          </Tray>
        </Taskbar>
      </Desktop>
    </>
  );
}
